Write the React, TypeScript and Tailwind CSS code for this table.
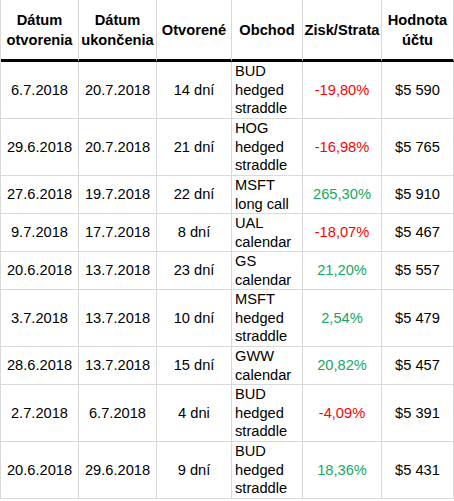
const rows = [
  { open: "6.7.2018", close: "20.7.2018", days: "14 dní", trade: ["BUD", "hedged", "straddle"], pl: "-19,80%", value: "$5 590" },
  { open: "29.6.2018", close: "20.7.2018", days: "21 dní", trade: ["HOG", "hedged", "straddle"], pl: "-16,98%", value: "$5 765" },
  { open: "27.6.2018", close: "19.7.2018", days: "22 dní", trade: ["MSFT", "long call"], pl: "265,30%", value: "$5 910" },
  { open: "9.7.2018", close: "17.7.2018", days: "8 dní", trade: ["UAL", "calendar"], pl: "-18,07%", value: "$5 467" },
  { open: "20.6.2018", close: "13.7.2018", days: "23 dní", trade: ["GS", "calendar"], pl: "21,20%", value: "$5 557" },
  { open: "3.7.2018", close: "13.7.2018", days: "10 dní", trade: ["MSFT", "hedged", "straddle"], pl: "2,54%", value: "$5 479" },
  { open: "28.6.2018", close: "13.7.2018", days: "15 dní", trade: ["GWW", "calendar"], pl: "20,82%", value: "$5 457" },
  { open: "2.7.2018", close: "6.7.2018", days: "4 dni", trade: ["BUD", "hedged", "straddle"], pl: "-4,09%", value: "$5 391" },
  { open: "20.6.2018", close: "29.6.2018", days: "9 dní", trade: ["BUD", "hedged", "straddle"], pl: "18,36%", value: "$5 431" },
];

const headers = [
  ["Dátum", "otvorenia"],
  ["Dátum", "ukončenia"],
  ["Otvorené"],
  ["Obchod"],
  ["Zisk/Strata"],
  ["Hodnota", "účtu"],
];

const grid = "grid grid-cols-[78px_78px_75px_71px_79px_72px]";

export default function App() {
  return (
    <div className="w-[454px] bg-white text-black font-['Liberation_Sans',Arial,sans-serif] text-[14.67px] leading-[18.67px]">
      <div className="border-l border-[#d9d9d9] w-[454px]">
        <div className={grid}>
          {headers.map((h, i) => (
            <div
              key={i}
              className="h-[62px] border-r border-r-[#d9d9d9] border-b-[3px] border-b-black flex flex-col items-center justify-center font-bold leading-[20px] text-center"
            >
              {h.map((t) => (
                <span key={t}>{t}</span>
              ))}
            </div>
          ))}
        </div>
        {rows.map((r, i) => {
          const h = r.trade.length === 3 ? "h-[57px]" : "h-[38px]";
          const cell = `${h} border-r border-b border-[#d9d9d9] flex items-center`;
          const neg = r.pl.startsWith("-");
          return (
            <div key={i} className={grid}>
              <div className={`${cell} justify-center`}>{r.open}</div>
              <div className={`${cell} justify-center`}>{r.close}</div>
              <div className={`${cell} justify-center`}>{r.days}</div>
              <div className={`${cell} pl-[3px]`}>
                <div className="flex flex-col">
                  {r.trade.map((t) => (
                    <span key={t}>{t}</span>
                  ))}
                </div>
              </div>
              <div className={`${cell} justify-center ${neg ? "text-[#ff0000]" : "text-[#15a862]"}`}>{r.pl}</div>
              <div className={`${cell} justify-center`}>{r.value}</div>
            </div>
          );
        })}
      </div>
    </div>
  );
}
